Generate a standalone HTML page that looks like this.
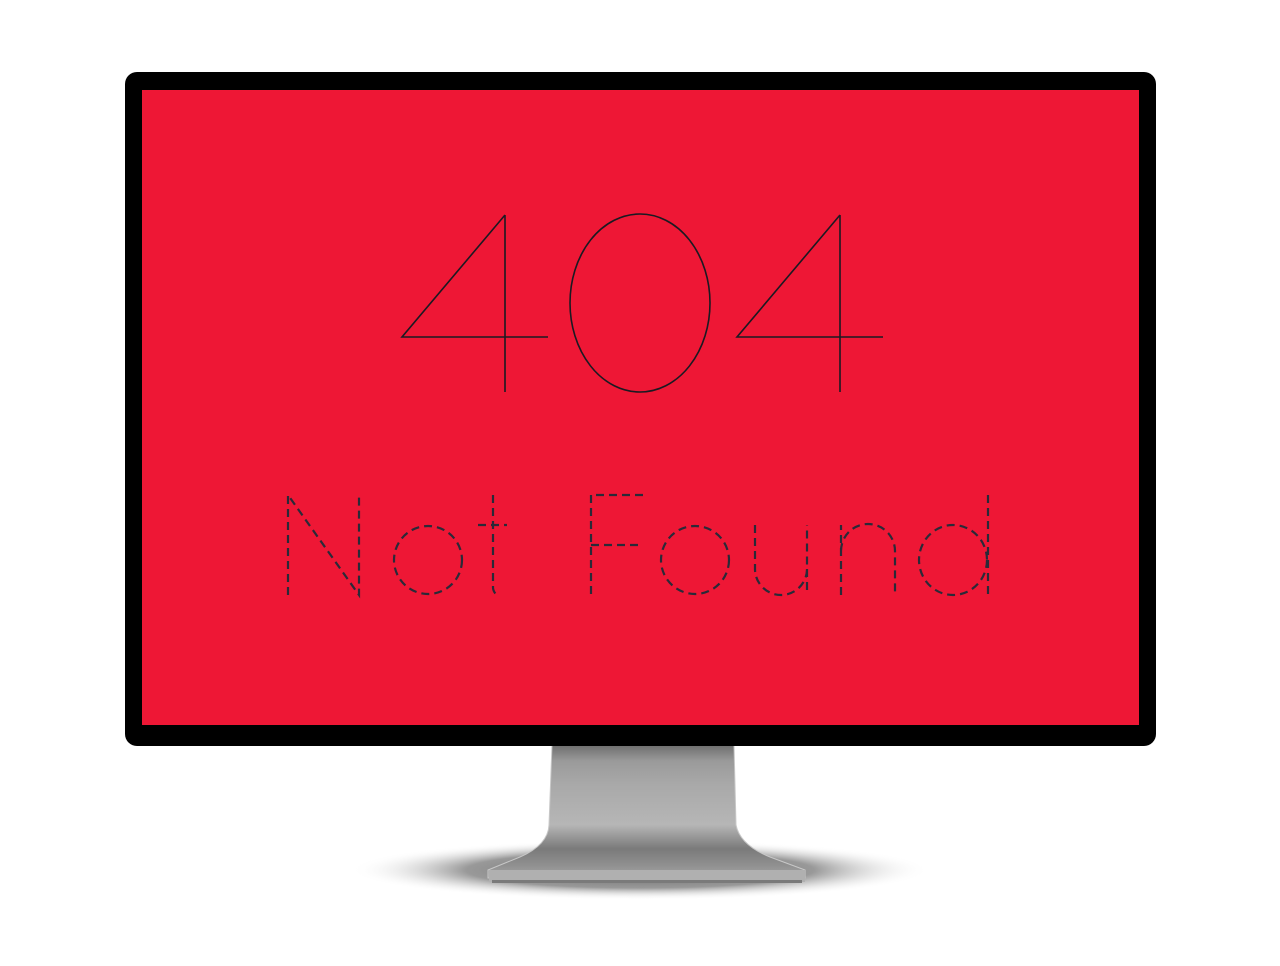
<!DOCTYPE html>
<html><head><style>html,body{margin:0;padding:0;background:#fff;}svg{display:block}</style></head>
<body>
<svg width="1280" height="966" viewBox="0 0 1280 966" xmlns="http://www.w3.org/2000/svg">
<defs>
<radialGradient id="sh" cx="0.5" cy="0.5" r="0.5">
<stop offset="0" stop-color="#666"/><stop offset="0.6" stop-color="#999"/><stop offset="1" stop-color="#fff" stop-opacity="0"/>
</radialGradient>
<linearGradient id="st" x1="0" y1="0" x2="0" y2="1">
<stop offset="0" stop-color="#6e6e6e"/><stop offset="0.12" stop-color="#9a9a9a"/><stop offset="0.3" stop-color="#a9a9a9"/><stop offset="0.6" stop-color="#b6b6b6"/><stop offset="0.78" stop-color="#7a7a7a"/><stop offset="0.9" stop-color="#8f8f8f"/><stop offset="1" stop-color="#a5a5a5"/>
</linearGradient>
</defs>
<ellipse cx="640" cy="870" rx="290" ry="30" fill="url(#sh)"/>
<path d="M552 745 L734 745 L736 825 Q740 845 770 857 L805 870 L805 878 L488 878 L488 870 L520 857 Q548 845 549 825 Z" fill="url(#st)" stroke="#c8c8c8" stroke-width="1"/>
<rect x="489" y="870" width="316" height="12" fill="#b0b0b0"/>
<rect x="492" y="880" width="310" height="3" fill="#7a7a7a"/>
<rect x="125" y="72" width="1031" height="674" rx="12" fill="#000"/>
<rect x="142" y="90" width="997" height="635" fill="#ee1735"/>
<g fill="none" stroke="#1a1a22" stroke-width="1.6">
<path d="M505 215 L402 337 L548 337 M505 215 L505 392"/>
<ellipse cx="640" cy="303" rx="70" ry="89"/>
<path d="M840 215 L737 337 L883 337 M840 215 L840 392"/>
</g>
<g fill="none" stroke="#2a2a38" stroke-width="2.2" stroke-dasharray="8 5">
<path d="M288 595 L288 495 L359 595 L359 495"/>
<circle cx="428" cy="560" r="34"/>
<path d="M493 495 L493 588 Q494 595 500 595 M478 525 L507 525"/>
<path d="M643 495 L591 495 L591 595 M591 545 L640 545"/>
<circle cx="695" cy="560" r="34"/>
<path d="M755 525 L755 569 A26 26 0 0 0 807 569 L807 525 M807 569 L807 595"/>
<path d="M841 595 L841 525 M841 551 A27 27 0 0 1 895 551 L895 595"/>
<ellipse cx="953" cy="560" rx="34" ry="35"/>
<path d="M988 495 L988 595"/>
</g>
</svg>
</body></html>
